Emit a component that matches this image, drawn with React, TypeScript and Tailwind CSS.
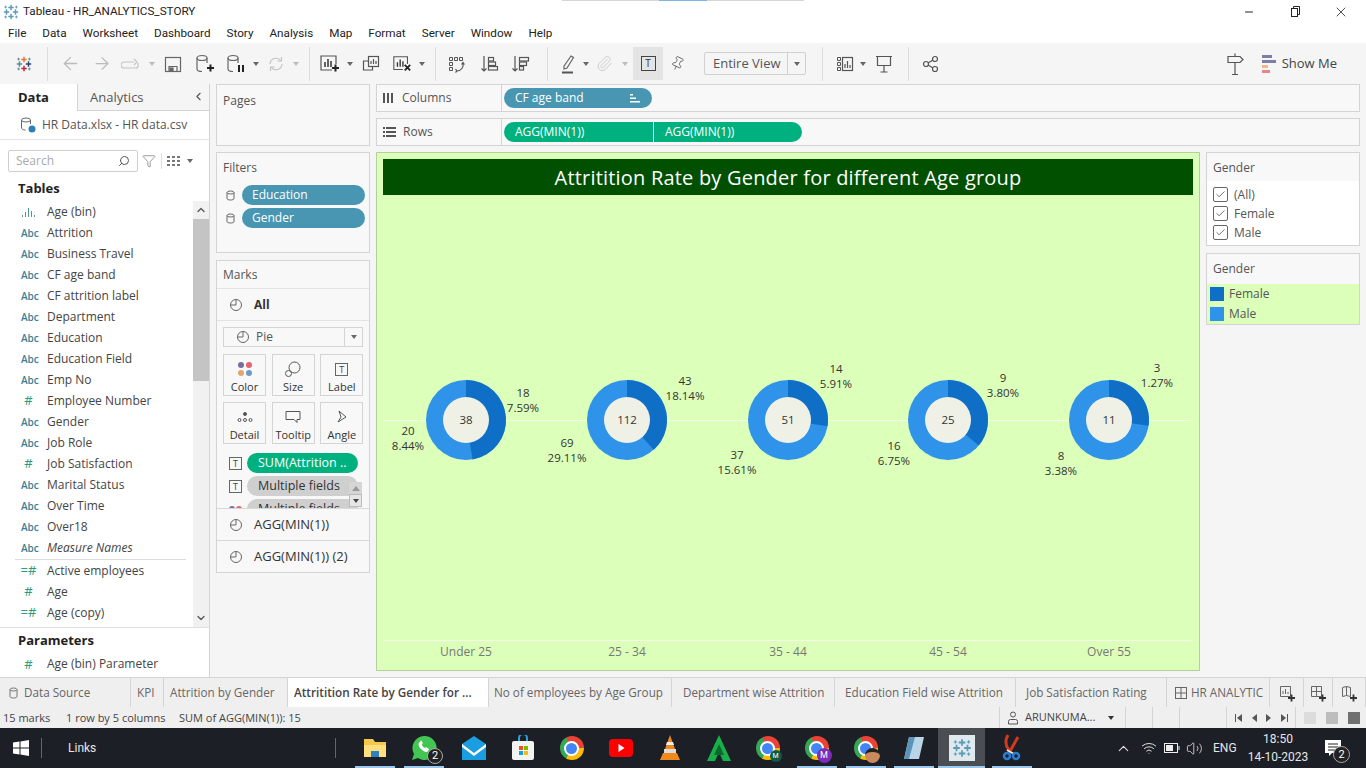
import type { ReactNode } from "react";
import { ArrowLeft, ArrowRight, Check, ChevronDown, ChevronLeft, ChevronUp, Minus, Paperclip, Pin, Search, Wifi, Volume2, X, Filter } from "lucide-react";

const font = { fontFamily: '"Open Sans", "Liberation Sans", sans-serif' };
const uiFont = { fontFamily: 'Roboto, "Liberation Sans", sans-serif' };

const fields: [string, string, boolean?][] = [
  ["bin", "Age (bin)"],
  ["abc", "Attrition"],
  ["abc", "Business Travel"],
  ["abc", "CF age band"],
  ["abc", "CF attrition label"],
  ["abc", "Department"],
  ["abc", "Education"],
  ["abc", "Education Field"],
  ["abc", "Emp No"],
  ["num", "Employee Number"],
  ["abc", "Gender"],
  ["abc", "Job Role"],
  ["num", "Job Satisfaction"],
  ["abc", "Marital Status"],
  ["abc", "Over Time"],
  ["abc", "Over18"],
  ["abc", "Measure Names", true],
];

const measures: [string, string][] = [
  ["calc", "Active employees"],
  ["num", "Age"],
  ["calc", "Age (copy)"],
];

const FieldIcon = ({ kind }: { kind: string }) => {
  if (kind === "abc") return <span className="w-[38px] pl-[21px] text-[10px] font-semibold text-[#3d7f95] leading-none whitespace-nowrap">Abc</span>;
  if (kind === "bin")
    return (
      <span className="w-[38px] pl-[21px]">
        <svg width="16" height="12" viewBox="0 0 16 12" fill="#4c9e8a">
          <rect x="1" y="9" width="1" height="2" /><rect x="4" y="6" width="1" height="5" /><rect x="7" y="2" width="1" height="9" /><rect x="10" y="5" width="1" height="6" /><rect x="13" y="9" width="1" height="2" />
        </svg>
      </span>
    );
  return <span className="w-[38px] pl-[19px] text-[13px] text-[#2f9a7c] leading-none whitespace-nowrap text-center">{kind === "calc" ? "=#" : "#"}</span>;
};

const Svg = ({ children, w = 20, h = 20, c = "#555" }: { children: ReactNode; w?: number; h?: number; c?: string }) => (
  <svg width={w} height={h} viewBox={`0 0 ${w} ${h}`} fill="none" stroke={c} strokeWidth="1.2">{children}</svg>
);

const Caret = ({ c = "#666" }: { c?: string }) => <span className="block w-0 h-0 border-x-[3px] border-x-transparent border-t-[4px] shrink-0" style={{ borderTopColor: c }} />;

const TableauMark = ({ size = 18, dark = false }: { size?: number; dark?: boolean }) => {
  const col = dark ? ["#e8762c", "#c72035", "#5b879b", "#1f447e"] : ["#5b9bb5", "#5b9bb5", "#5b9bb5", "#5b9bb5"];
  return (
    <svg width={size} height={size} viewBox="0 0 20 20" strokeWidth="1.6">
      <path d="M10 2v6M7 5h6" stroke={col[0]} />
      <path d="M10 12v6M7 15h6" stroke={col[1]} />
      <path d="M2 10h6M5 7v6" stroke={col[2]} />
      <path d="M12 10h6M15 7v6" stroke={col[3]} />
      <path d="M4 3v3M2.5 4.5h3M16 3v3M14.500 4.500h3M4 14v3M2.500 15.500h3M16 14v3M14.500 15.500h3" stroke={col[2]} strokeWidth="1" />
    </svg>
  );
};

const Plus = () => <path d="M13 15h7M16.500 11.500v7" stroke="#222" strokeWidth="2" />;

const Db = ({ badge }: { badge: ReactNode }) => (
  <Svg w={22} h={22} c="#666">
    <ellipse cx="8" cy="5" rx="5" ry="2.500" />
    <path d="M3 5v11c0 1.500 2 2.500 5 2.500M13 5v5" />
    {badge}
  </Svg>
);

const ChartPlus = () => (
  <Svg w={22} h={22} c="#555">
    <path d="M13 17H2V3h15v8" />
    <path d="M6 14V9M9 14V6M12 14V8" stroke="#333" strokeWidth="1.500" />
    <Plus />
  </Svg>
);

const Tool = ({ w, children }: { w: number; children?: ReactNode }) => (
  <div className="flex items-center justify-center shrink-0 h-full" style={{ width: w }}>{children}</div>
);

const Sep = () => <div className="w-px h-[34px] bg-[#dcdcdc] shrink-0" />;

const Pill = ({ label, color, w, icon }: { label: string; color: string; w: number; icon?: ReactNode }) => (
  <div className="h-5 rounded-[10px] flex items-center justify-between pl-[11px] pr-3 text-white text-[12px]" style={{ width: w, backgroundColor: color }}>
    <span>{label}</span>
    {icon}
  </div>
);

const MarkBtn = ({ label, children }: { label: string; children: ReactNode }) => (
  <div className="w-[43px] h-[42px] border border-[#d4d4d4] flex flex-col items-center justify-end pb-[1px] gap-[2px] text-[11px] leading-[14px] text-[#333]">
    <div className="h-[18px] flex items-center">{children}</div>
    <span className="whitespace-nowrap">{label}</span>
  </div>
);

const PieIcon = () => (
  <svg width="14" height="14" viewBox="0 0 14 14" fill="none" stroke="#666" strokeWidth="1">
    <circle cx="7" cy="7" r="5.500" /><path d="M7 7V1.500M7 7H1.500" />
  </svg>
);

const TBox = () => (
  <span className="block w-[13px] h-[13px] border border-[#666] text-[9px] leading-[11px] text-center text-[#444] shrink-0">T</span>
);

const donuts = [
  { cx: 466, total: 38, f: 18, m: 20 },
  { cx: 627, total: 112, f: 43, m: 69 },
  { cx: 788, total: 51, f: 14, m: 37 },
  { cx: 948, total: 25, f: 9, m: 16 },
  { cx: 1109, total: 11, f: 3, m: 8 },
];

const pieLabels = [
  [523, 393, "18", "7.59%"], [408, 431, "20", "8.44%"],
  [685, 381, "43", "18.14%"], [567, 443, "69", "29.11%"],
  [836, 369, "14", "5.91%"], [737, 455, "37", "15.61%"],
  [1003, 378, "9", "3.80%"], [894, 446, "16", "6.75%"],
  [1157, 368, "3", "1.27%"], [1061, 456, "8", "3.38%"],
] as [number, number, string, string][];

const axis = ["Under 25", "25 - 34", "35 - 44", "45 - 54", "Over 55"];

const slice = (cx: number, cy: number, r: number, frac: number) => {
  const a = frac * 2 * Math.PI;
  const x = cx + r * Math.sin(a);
  const y = cy - r * Math.cos(a);
  return `M${cx} ${cy}L${cx} ${cy - r}A${r} ${r} 0 ${frac > 0.5 ? 1 : 0} 1 ${x} ${y}Z`;
};

// chart coordinates are page coordinates minus the viz box origin (376, 195)
const Chart = () => (
  <svg width="824" height="476" viewBox="376 195 824 476" className="block" style={font}>
    <line x1="384" x2="1192" y1="420.500" y2="420.500" stroke="#f4fbe8" />
    <line x1="384" x2="1192" y1="640.500" y2="640.500" stroke="#f4fbe8" />
    {donuts.map((d) => (
      <g key={d.cx}>
        <circle cx={d.cx} cy={420} r={40} fill="#2f93ea" />
        <path d={slice(d.cx, 420, 40, d.f / d.total)} fill="#0f6fc6" />
        <circle cx={d.cx} cy={420} r={23} fill="#eff1e6" />
        <text x={d.cx} y={424} textAnchor="middle" fontSize="11.500" fill="#333">{d.total}</text>
      </g>
    ))}
    {pieLabels.map(([x, y, a, b]) => (
      <g key={b} fontSize="11.500" fill="#333" textAnchor="middle">
        <text x={x} y={y + 4}>{a}</text>
        <text x={x} y={y + 19}>{b}</text>
      </g>
    ))}
    {axis.map((t, i) => (
      <text key={t} x={donuts[i].cx} y={656} textAnchor="middle" fontSize="12" fill="#777">{t}</text>
    ))}
  </svg>
);

const Chrome = ({ badge }: { badge?: ReactNode }) => (
  <div className="relative w-6 h-6">
    <div className="w-6 h-6 rounded-full flex items-center justify-center" style={{ background: "conic-gradient(from -30deg, #ea4335 0 120deg, #fbbc05 120deg 240deg, #34a853 240deg 360deg)" }}>
      <div className="w-[11px] h-[11px] rounded-full bg-[#4285f4] border-2 border-white box-content" />
    </div>
    {badge}
  </div>
);

const tabs: [string, number, number][] = [
  ["KPI", 33, 6],
  ["Attrition by Gender", 124, 6],
];
const tabsRight: [string, number, number][] = [
  ["No of employees by Age Group", 183, 5],
  ["Department wise Attrition", 163, 11],
  ["Education Field wise Attrition", 181, 10],
  ["Job Satisfaction Rating", 151, 10],
];

const TaskIcon = ({ w, active, children, on }: { w: number; active?: boolean; children: ReactNode; on?: boolean }) => (
  <div className={`relative h-full flex items-center justify-center shrink-0 ${on ? "bg-[#4a4d52]" : ""}`} style={{ width: w }}>
    {children}
    {active && <span className={`absolute bottom-0 h-[2px] bg-[#9cc8ee] ${on ? "left-0 right-0" : "left-1/2 -translate-x-1/2 w-10"}`} />}
  </div>
);

export default function App() {
  return (
    <div className="w-[1366px] h-[768px] overflow-hidden flex flex-col bg-white text-[#333] text-[12px] relative" style={font}>
      <div className="absolute top-0 left-[562px] w-[242px] h-px bg-[#d6d6d6]"><div className="ml-[97px] w-[48px] h-px bg-[#7fb2de]" /></div>

      {/* title bar */}
      <div className="h-[23px] flex items-center shrink-0 pl-[2px]" style={uiFont}>
        <TableauMark size={18} />
        <span className="ml-[3px] text-[11.700px] text-[#222]">Tableau - HR_ANALYTICS_STORY</span>
        <div className="ml-auto flex items-center h-full pr-[2px]">
          <Tool w={46}><Minus size={12} color="#222" /></Tool>
          <Tool w={46}>
            <svg width="12" height="12" viewBox="0 0 12 12" fill="none" stroke="#222"><rect x="2.500" y="2.500" width="6" height="8" /><path d="M4.500 2.500V0.500h6v8h-2" /></svg>
          </Tool>
          <Tool w={46}><X size={16} color="#222" strokeWidth={1.2} /></Tool>
        </div>
      </div>

      {/* menu */}
      <div className="h-5 flex items-center shrink-0 pl-2 pt-px gap-[16px] text-[11.700px] text-[#222]" style={uiFont}>
        {["File", "Data", "Worksheet", "Dashboard", "Story", "Analysis", "Map", "Format", "Server", "Window", "Help"].map((m) => (
          <span key={m}>{m}</span>
        ))}
      </div>

      {/* toolbar */}
      <div className="h-[41px] bg-[#f5f5f5] flex items-center shrink-0">
        <Tool w={47}><TableauMark size={18} dark /></Tool>
        <Sep />
        <Tool w={44}><ArrowLeft size={21} color="#bbb" strokeWidth={1.500} /></Tool>
        <Tool w={20}><ArrowRight size={21} color="#bbb" strokeWidth={1.500} /></Tool>
        <Tool w={38}>
          <Svg w={20} h={14} c="#c4c4c4"><path d="M13 5H3a2 2 0 0 0 0 6h12a2 2 0 0 0 2-2V6M13 2l3 3-3 3" /></Svg>
        </Tool>
        <Tool w={4}><Caret c="#bbb" /></Tool>
        <Tool w={38}>
          <Svg w={18} h={18} c="#666"><rect x="1.500" y="2.500" width="15" height="14" /><path d="M5 16.500v-5h8v5" /><rect x="6" y="13" width="3" height="3" fill="#666" /></Svg>
        </Tool>
        <Tool w={26}><Db badge={<Plus />} /></Tool>
        <Tool w={36}><Db badge={<path d="M14 12v7M18 12v7" stroke="#222" strokeWidth="2" />} /></Tool>
        <Tool w={4}><Caret /></Tool>
        <Tool w={36}>
          <Svg w={18} h={18} c="#c4c4c4"><path d="M3 9a6 6 0 0 1 11-3M15 9a6 6 0 0 1-11 3M14.500 2v4h-4M3.500 16v-4h4" /></Svg>
        </Tool>
        <Tool w={4}><Caret c="#bbb" /></Tool>
        <Tool w={11} />
        <Sep />
        <Tool w={40}><ChartPlus /></Tool>
        <Tool w={0}><Caret /></Tool>
        <Tool w={42}>
          <Svg w={20} h={20} c="#555"><rect x="7.500" y="2.500" width="10" height="10" /><path d="M10 10V7M12.500 10V5M15 10V7" /><path d="M7 7H2.500v9h9v-3" /></Svg>
        </Tool>
        <Tool w={20}>
          <Svg w={22} h={22} c="#555">
            <path d="M12 17H2V3h15v8" /><path d="M6 14V9M9 14V6M12 14V8" stroke="#333" strokeWidth="1.500" />
            <path d="M14 12l6 6M20 12l-6 6" stroke="#222" strokeWidth="2" />
          </Svg>
        </Tool>
        <Tool w={20}><Caret /></Tool>
        <Tool w={3} />
        <Sep />
        <Tool w={42}>
          <Svg w={20} h={20} c="#555">
            <path d="M2.500 3.500h3v3h-3zM7.500 3.500h3v3h-3zM12.500 3.500h3v3h-3zM2.500 8.500h3v3h-3zM2.500 13.500h3v3h-3z" strokeWidth="1" />
            <path d="M16 9c1 4-2 8-6 8M8.500 15l1.500 2-1.500 1.500M14.500 10.500l1.500-2 1.500 2" />
          </Svg>
        </Tool>
        <Tool w={24}>
          <Svg w={20} h={20} c="#555"><path d="M4 2v15M1.500 14.500L4 17l2.500-2.500" /><rect x="8.500" y="3.500" width="5" height="3.500" /><rect x="8.500" y="8" width="7" height="3.500" /><rect x="8.500" y="12.500" width="9" height="3.500" /></Svg>
        </Tool>
        <Tool w={38}>
          <Svg w={20} h={20} c="#555"><path d="M4 2v15M1.500 14.500L4 17l2.500-2.500" /><rect x="8.500" y="3.500" width="9" height="3.500" /><rect x="8.500" y="8" width="7" height="3.500" /><rect x="8.500" y="12.500" width="4" height="3.500" /></Svg>
        </Tool>
        <Tool w={7} />
        <Sep />
        <Tool w={2} />
        <Tool w={36}>
          <Svg w={18} h={20} c="#666"><path d="M5 12L12 2l2.500 1.500L8 14l-3 1zM3 18.500h11" /><path d="M3 18.500h11" stroke="#555" strokeWidth="2" /></Svg>
        </Tool>
        <Tool w={0}><Caret /></Tool>
        <Tool w={36}><Paperclip size={17} color="#c4c4c4" strokeWidth={1.200} /></Tool>
        <Tool w={5}><Caret c="#bbb" /></Tool>
        <Tool w={6} />
        <div className="w-[30px] h-[33px] bg-[#e4e4e4] flex items-center justify-center shrink-0">
          <span className="w-[15px] h-[15px] border border-[#444] text-[10px] leading-[13px] text-center text-[#333]">T</span>
        </div>
        <Tool w={28}><Pin size={15} color="#555" strokeWidth={1.200} className="rotate-[25deg]" /></Tool>
        <Tool w={13} />
        <div className="w-[102px] h-[23px] border border-[#d0d0d0] rounded-[2px] flex items-center shrink-0 text-[#555] text-[13px]">
          <span className="pl-2 flex-1 whitespace-nowrap">Entire View</span>
          <span className="w-[18px] h-full border-l border-[#d0d0d0] flex items-center justify-center"><Caret /></span>
        </div>
        <Tool w={16} />
        <Sep />
        <Tool w={4} />
        <Tool w={36}>
          <Svg w={18} h={18} c="#555"><path d="M1.500 2.500h3v3h-3zM1.500 7.500h3v3h-3zM1.500 12.500h3v3h-3z" strokeWidth="1" /><rect x="6.500" y="2.500" width="10" height="13" /><path d="M9 13V9M11.500 13V6M14 13v-3" /></Svg>
        </Tool>
        <Tool w={0}><Caret /></Tool>
        <Tool w={42}>
          <Svg w={18} h={20} c="#555"><path d="M1 2.500h16M2.500 2.500v9h13v-9M9 11.500V18M5.500 18h7" /></Svg>
        </Tool>
        <Tool w={3} />
        <Sep />
        <Tool w={44}>
          <Svg w={18} h={18} c="#555"><circle cx="4" cy="9" r="2.500" /><circle cx="13" cy="4" r="2.500" /><circle cx="13" cy="14" r="2.500" /><path d="M6 8l5-3M6 10l5 3" /></Svg>
        </Tool>
        <div className="ml-auto flex items-center h-full pr-[29px]">
          <Svg w={20} h={24} c="#555"><path d="M3 4.500h12l3 3-3 3H3zM10 1.500v3M10 10.500v12M7 22.500h6" /></Svg>
          <div className="ml-[17px] flex flex-col gap-[2px] w-[14px]">
            <span className="h-[3px] w-[10px] bg-[#7d7da6]" /><span className="h-[3px] w-[14px] bg-[#7d7da6]" /><span className="h-[3px] w-[6px] bg-[#f0b78a]" /><span className="h-[3px] w-[8px] bg-[#e5848c]" />
          </div>
          <span className="ml-[6px] text-[13px] text-[#444] whitespace-nowrap">Show Me</span>
        </div>
      </div>

      {/* main */}
      <div className="flex-1 min-h-0 flex bg-[#f5f5f5]">
        {/* data pane */}
        <aside className="w-[210px] shrink-0 bg-white border-r border-[#d4d4d4] flex flex-col">
          <div className="h-[27px] flex shrink-0 text-[13px]">
            <div className="w-[77px] pl-[18px] flex items-center font-bold text-[#222]">Data</div>
            <div className="flex-1 flex items-center pl-[12px] pt-px bg-[#f5f5f5] border-l border-b border-[#d4d4d4] text-[#555] relative">
              Analytics
              <ChevronLeft size={13} color="#555" className="absolute right-[4px] top-[6px]" />
            </div>
          </div>
          <div className="h-[29px] flex items-center pl-[20px] gap-[6px] shrink-0 border-b border-[#e6e6e6] text-[#555]">
            <svg width="16" height="16" viewBox="0 0 16 16" fill="none" stroke="#666"><ellipse cx="6" cy="3" rx="4.500" ry="2" /><path d="M1.500 3v8c0 1 1.500 2 4 2M10.500 3v4" /><circle cx="12" cy="12" r="3.500" fill="#2f7fb5" stroke="none" /></svg>
            <span className="whitespace-nowrap">HR Data.xlsx - HR data.csv</span>
          </div>
          <div className="h-[22px] mt-[10px] flex items-center shrink-0 pl-2">
            <div className="w-[130px] h-[22px] border border-[#cfcfcf] rounded-[2px] flex items-center justify-between px-[7px] text-[#aaa]">
              <span>Search</span>
              <Search size={12} color="#555" className="-scale-x-100" />
            </div>
            <Filter size={14} color="#555" strokeWidth={1} className="ml-[4px]" />
            <span className="w-px h-4 bg-[#ddd] ml-[5px]" />
            <svg className="ml-[5px]" width="13" height="10" viewBox="0 0 13 10" fill="#777"><path d="M0 0h3v2H0zM5 0h3v2H5zM10 0h3v2h-3zM0 4h3v2H0zM5 4h3v2H5zM10 4h3v2h-3zM0 8h3v2H0zM5 8h3v2H5zM10 8h3v2h-3z" /></svg>
            <span className="ml-[7px] flex"><Caret /></span>
          </div>
          <div className="h-[29px] flex items-end pl-[18px] text-[13px] font-bold text-[#222] shrink-0 pb-[3px]">Tables</div>
          <div className="h-[427px] flex shrink-0 border-b border-[#e0e0e0]">
            <div className="flex-1 min-w-0 overflow-hidden">
              {fields.map(([k, n, it]) => (
                <div key={n} className="h-[21px] flex items-center text-[#444]">
                  <FieldIcon kind={k} />
                  <span className={`ml-[9px] whitespace-nowrap ${it ? "italic" : ""}`}>{n}</span>
                </div>
              ))}
              <div className="ml-[15px] mr-[7px] border-t border-[#dcdcdc] mt-[1px]" />
              {measures.map(([k, n]) => (
                <div key={n} className="h-[21px] flex items-center text-[#444]">
                  <FieldIcon kind={k} />
                  <span className="ml-[9px] whitespace-nowrap">{n}</span>
                </div>
              ))}
            </div>
            <div className="w-[16px] shrink-0 bg-[#f1f1f1] flex flex-col items-center">
              <ChevronUp size={12} color="#555" strokeWidth={2.500} className="my-[3px]" />
              <div className="w-full h-[162px] bg-[#c4c4c4]" />
              <ChevronDown size={12} color="#555" strokeWidth={2.500} className="mt-auto mb-[3px]" />
            </div>
          </div>
          <div className="h-[22px] flex items-end pl-[18px] text-[13px] font-bold text-[#222] shrink-0">Parameters</div>
          <div className="h-[28px] flex items-center text-[#444] shrink-0">
            <FieldIcon kind="num" />
            <span className="ml-[9px] whitespace-nowrap">Age (bin) Parameter</span>
          </div>
        </aside>

        {/* cards */}
        <div className="w-[154px] ml-[6px] shrink-0 flex flex-col">
          <div className="h-[62px] bg-[#f8f8f8] border border-[#d4d4d4] px-[6px] pt-[7px] text-[#555]">Pages</div>
          <div className="h-[101px] mt-[6px] bg-[#f8f8f8] border border-[#d4d4d4] pl-[6px] pr-[4px] pt-[6px]">
            <div className="text-[#555]">Filters</div>
            <div className="mt-[8px] flex flex-col gap-[3px]">
              {["Education", "Gender"].map((f) => (
                <div key={f} className="flex items-center">
                  <svg className="ml-[3px] mr-[7px] shrink-0" width="9" height="11" viewBox="0 0 9 11" fill="none" stroke="#666"><ellipse cx="4.500" cy="2.500" rx="3.500" ry="1.500" /><path d="M1 2.500v6c0 2 7 2 7 0v-6" /></svg>
                  <div className="flex-1 h-5 rounded-[10px] bg-[#4996b2] text-white pl-[10px] flex items-center">{f}</div>
                </div>
              ))}
            </div>
          </div>
          <div className="h-[313px] mt-[7px] bg-[#f8f8f8] border border-[#d4d4d4] flex flex-col text-[#333]">
            <div className="h-[28px] flex items-center px-[6px] text-[#555] border-b border-[#e4e4e4] shrink-0">Marks</div>
            <div className="h-[32px] flex items-center pl-[12px] gap-[11px] border-b border-[#e4e4e4] shrink-0">
              <PieIcon /><span className="font-bold">All</span>
            </div>
            <div className="h-[187px] px-[6px] pt-[6px] relative overflow-hidden shrink-0">
              <div className="h-5 border border-[#d4d4d4] flex items-center text-[#555]">
                <span className="ml-[12px] mr-[6px]"><PieIcon /></span>Pie
                <span className="ml-auto w-[18px] h-full border-l border-[#d4d4d4] flex items-center justify-center"><Caret /></span>
              </div>
              <div className="grid grid-cols-3 gap-x-[6px] gap-y-[6px] mt-[7px] w-[140px]">
                <MarkBtn label="Color">
                  <svg width="16" height="16" viewBox="0 0 16 16"><circle cx="4" cy="4" r="3" fill="#7d6b9e" /><circle cx="12" cy="4" r="3" fill="#e5646e" /><circle cx="4" cy="12" r="3" fill="#e8a26c" /><circle cx="12" cy="12" r="3" fill="#6b9cc9" /></svg>
                </MarkBtn>
                <MarkBtn label="Size">
                  <svg width="16" height="16" viewBox="0 0 16 16" fill="none" stroke="#555"><circle cx="9.500" cy="6.500" r="5.500" /><circle cx="3.500" cy="12.500" r="3" /></svg>
                </MarkBtn>
                <MarkBtn label="Label"><TBox /></MarkBtn>
                <MarkBtn label="Detail">
                  <svg width="16" height="14" viewBox="0 0 16 14" fill="none" stroke="#555"><circle cx="8" cy="4" r="1.500" fill="#555" /><circle cx="2.500" cy="10" r="1.500" /><circle cx="8" cy="10" r="1.500" /><circle cx="13.500" cy="10" r="1.500" /></svg>
                </MarkBtn>
                <MarkBtn label="Tooltip">
                  <svg width="16" height="14" viewBox="0 0 16 14" fill="none" stroke="#555"><path d="M1 1.500h14v8h-3v3l-3-3H1z" /></svg>
                </MarkBtn>
                <MarkBtn label="Angle">
                  <svg width="12" height="14" viewBox="0 0 12 14" fill="none" stroke="#555"><path d="M3 1l7 6-8 5 3-5z" /></svg>
                </MarkBtn>
              </div>
              <div className="mt-[9px] flex items-center text-[12.500px]">
                <span className="ml-[6px] flex"><TBox /></span>
                <div className="ml-[5px] w-[111px] h-5 rounded-[10px] bg-[#00b180] text-white pl-[11px] flex items-center whitespace-nowrap overflow-hidden">SUM(Attrition ..</div>
              </div>
              <div className="mt-[3px] flex items-center text-[12.500px]">
                <span className="ml-[6px] flex"><TBox /></span>
                <div className="ml-[5px] w-[111px] h-5 rounded-[10px] bg-[#cfcfcf] text-[#333] pl-[11px] flex items-center whitespace-nowrap overflow-hidden">Multiple fields</div>
              </div>
              <div className="mt-[3px] flex items-center text-[12.500px]">
                <svg className="ml-[5px] shrink-0" width="16" height="8" viewBox="0 0 16 8"><circle cx="4" cy="4" r="3" fill="#7d6b9e" /><circle cx="11" cy="4" r="3" fill="#e5646e" /></svg>
                <div className="ml-[3px] w-[111px] h-5 rounded-[10px] bg-[#cfcfcf] text-[#333] pl-[11px] flex items-center whitespace-nowrap overflow-hidden">Multiple fields</div>
              </div>
              <div className="absolute right-[7px] top-[161px] w-[13px] h-[25px] flex flex-col items-center">
                <div className="h-[12px] w-full bg-[#d6d6d6] flex items-center justify-center"><span className="border-x-[4px] border-x-transparent border-b-[5px] border-b-[#999] w-0 h-0" /></div>
                <div className="h-[13px] w-full bg-[#e6e6e6] border border-[#bbb] flex items-center justify-center"><Caret c="#444" /></div>
              </div>
            </div>
            {["AGG(MIN(1))", "AGG(MIN(1)) (2)"].map((l) => (
              <div key={l} className="h-[32px] flex items-center pl-[12px] gap-[11px] border-t border-[#d8d8d8] text-[13px] shrink-0"><PieIcon /><span>{l}</span></div>
            ))}
          </div>
        </div>

        {/* shelves and view */}
        <div className="flex-1 min-w-0 ml-[6px] flex flex-col">
          <div className="h-[28px] mr-[6px] bg-[#f8f8f8] border border-[#d4d4d4] flex items-center shrink-0">
            <div className="w-[125px] h-full flex items-center border-r border-[#d4d4d4] pl-[6px] text-[#555] gap-[7px]">
              <span className="flex gap-[2px] w-[12px]"><i className="w-[2px] h-[10px] bg-[#555]" /><i className="w-[2px] h-[10px] bg-[#555]" /><i className="w-[2px] h-[10px] bg-[#555]" /></span>
              Columns
            </div>
            <div className="ml-[2px]">
              <Pill label="CF age band" color="#4996b2" w={148} icon={
                <svg width="10" height="10" viewBox="0 0 10 10" fill="#fff"><path d="M0 1h3v1.500H0zM0 4.500h6V6H0zM0 8h10v1.500H0z" /></svg>
              } />
            </div>
          </div>
          <div className="h-[28px] mt-[6px] mr-[6px] bg-[#f8f8f8] border border-[#d4d4d4] flex items-center shrink-0">
            <div className="w-[125px] h-full flex items-center border-r border-[#d4d4d4] pl-[6px] text-[#555] gap-[7px]">
              <svg width="13" height="10" viewBox="0 0 13 10" fill="#555"><path d="M0 0h2v2H0zM3 0h10v2H3zM0 4h2v2H0zM3 4h10v2H3zM0 8h2v2H0zM3 8h10v2H3z" /></svg>
              Rows
            </div>
            <div className="ml-[2px] flex gap-[1px]">
              <div className="w-[149px] h-5 rounded-l-[10px] bg-[#00b180] text-white pl-[11px] flex items-center">AGG(MIN(1))</div>
              <div className="w-[148px] h-5 rounded-r-[10px] bg-[#00b180] text-white pl-[11px] flex items-center">AGG(MIN(1))</div>
            </div>
          </div>
          <div className="flex-1 min-h-0 flex mt-[6px]">
            <div className="w-[824px] h-[519px] shrink-0 bg-[#dcffb9] border border-[#b5cf9a] flex flex-col overflow-hidden">
              <div className="mx-[6px] mt-[6px] h-[36px] shrink-0 bg-[#005000] flex items-center justify-center pt-[2px] text-white text-[20px] font-medium tracking-[0.2px]">
                Attritition Rate by Gender for different Age group
              </div>
              <div className="-ml-px"><Chart /></div>
            </div>
            <div className="w-[154px] ml-[6px] shrink-0 flex flex-col gap-[7px]">
              <div className="h-[94px] bg-white border border-[#d4d4d4]">
                <div className="h-[28px] bg-[#f8f8f8] flex items-center px-[6px] pt-[2px] text-[#555]">Gender</div>
                <div className="pl-[6px] pt-[4px] flex flex-col">
                  {["(All)", "Female", "Male"].map((o) => (
                    <div key={o} className="h-[19px] flex items-center gap-[6px] text-[#555]">
                      <span className="w-[15px] h-[15px] border border-[#666] rounded-[2px] flex items-center justify-center"><Check size={11} color="#666" strokeWidth={2} /></span>
                      {o}
                    </div>
                  ))}
                </div>
              </div>
              <div className="h-[72px] bg-[#f8f8f8] border border-[#d4d4d4]">
                <div className="h-[30px] flex items-center px-[6px] text-[#555]">Gender</div>
                <div className="h-[40px] bg-[#dcffb9] pl-[3px] text-[#555]">
                  <div className="h-[20px] flex items-center gap-[5px]"><span className="w-[14px] h-[14px] bg-[#0f6fc6]" />Female</div>
                  <div className="h-[20px] flex items-center gap-[5px]"><span className="w-[14px] h-[14px] bg-[#2f93ea]" />Male</div>
                </div>
              </div>
            </div>
          </div>
        </div>
      </div>

      {/* sheet tabs */}
      <div className="h-[30px] flex shrink-0 bg-[#efefef] border-t border-[#d4d4d4] text-[#666] text-[11.700px]">
        <div className="w-[131px] flex items-center pl-[9px] gap-[6px] border-r border-[#d4d4d4] shrink-0">
          <svg width="9" height="12" viewBox="0 0 9 12" fill="none" stroke="#777"><ellipse cx="4.500" cy="2.500" rx="3.500" ry="1.500" /><path d="M1 2.500v7c0 2 7 2 7 0v-7" /></svg>
          Data Source
        </div>
        {tabs.map(([t, w, p]) => (
          <div key={t} className="flex items-center border-r border-[#d4d4d4] shrink-0 whitespace-nowrap" style={{ width: w, paddingLeft: p }}>{t}</div>
        ))}
        <div className="w-[201px] bg-white flex items-center pl-[6px] font-semibold text-[#444] border-r border-[#d4d4d4] shrink-0 whitespace-nowrap">Attritition Rate by Gender for ...</div>
        {tabsRight.map(([t, w, p]) => (
          <div key={t} className="flex items-center border-r border-[#d4d4d4] shrink-0 whitespace-nowrap" style={{ width: w, paddingLeft: p }}>{t}</div>
        ))}
        <div className="w-[103px] flex items-center pl-[8px] gap-[4px] border-r border-[#d4d4d4] shrink-0 whitespace-nowrap overflow-hidden">
          <svg className="shrink-0" width="12" height="12" viewBox="0 0 12 12" fill="none" stroke="#666"><rect x="0.500" y="0.500" width="11" height="11" /><path d="M6 0v12M0 6h12" /></svg>
          HR ANALYTIC
        </div>
        {[34, 29, 33].map((w, i) => (
          <div key={w} className="flex items-center justify-center border-r border-[#d4d4d4] shrink-0" style={{ width: w }}>
            <svg width="18" height="18" viewBox="0 0 18 18" fill="none" stroke="#666">
              {i === 0 && <path d="M2.500 2.500h10v10h-10zM5 10V7M7.500 10V5M10 10V8" />}
              {i === 1 && <path d="M2.500 2.500h10v10h-10zM7.500 2.500v10M2.500 7.500h10" />}
              {i === 2 && <path d="M2.500 3.500l4-1 4 1v9l-4-1-4 1zM6.500 2.500v9" />}
              <path d="M10 14h7M13.500 10.500v7" stroke="#333" strokeWidth="1.800" />
            </svg>
          </div>
        ))}
      </div>

      {/* status bar */}
      <div className="h-[21px] flex items-center shrink-0 bg-[#efefef] text-[11px] text-[#444] pl-[3px]">
        <span className="w-[63px] pt-px">15 marks</span>
        <span className="w-[113px] pt-px">1 row by 5 columns</span>
        <span className="pt-px">SUM of AGG(MIN(1)): 15</span>
        <div className="ml-auto flex items-center h-full">
          <div className="w-[127px] h-full border-x border-[#d4d4d4] flex items-center pl-[7px] gap-[6px] whitespace-nowrap">
            <svg width="12" height="14" viewBox="0 0 12 14" fill="none" stroke="#555"><circle cx="6" cy="3.500" r="2.500" /><path d="M1.500 13v-2.500a2 2 0 0 1 2-2h5a2 2 0 0 1 2 2V13z" /></svg>
            ARUNKUMA...
            <span className="ml-[7px] flex"><Caret c="#333" /></span>
          </div>
          <div className="w-[27px] h-full border-r border-[#d4d4d4]" />
          <div className="w-[27px] h-full border-r border-[#d4d4d4]" />
          <div className="w-[47px] h-full border-r border-[#d4d4d4]" />
          <div className="w-[69px] h-full flex items-center justify-center gap-[9px] text-[#555] border-r border-[#d4d4d4]">
            <svg width="7" height="8" viewBox="0 0 7 8" fill="#555"><path d="M0 0h1v8H0zM7 0v8L2 4z" /></svg>
            <svg width="6" height="8" viewBox="0 0 6 8" fill="#555"><path d="M6 0v8L1 4z" /></svg>
            <svg width="6" height="8" viewBox="0 0 6 8" fill="#555"><path d="M0 0v8l5-4z" /></svg>
            <svg width="7" height="8" viewBox="0 0 7 8" fill="#555"><path d="M6 0h1v8H6zM0 0v8l5-4z" /></svg>
          </div>
          <div className="w-[70px] h-full flex items-center justify-end gap-[10px] pr-[6px]">
            <span className="w-[12px] h-[12px] bg-[#dcdcdc]" /><span className="w-[12px] h-[12px] bg-[#bdbdbd]" /><span className="w-[12px] h-[12px] bg-[#707070]" />
          </div>
        </div>
      </div>

      {/* taskbar */}
      <div className="h-10 flex items-center shrink-0 bg-[#1c1f26] text-[#e6e6e6] text-[12px]" style={uiFont}>
        <TaskIcon w={41}>
          <svg width="16" height="16" viewBox="0 0 16 16" fill="#fff"><path d="M0 2.500l6.500-1v6H0zM7.500 1.400L16 0v7.500H7.500zM0 8.500h6.500v6l-6.500-1zM7.500 8.500H16V16l-8.500-1.400z" /></svg>
        </TaskIcon>
        <span className="w-px h-5 bg-[#666]" />
        <span className="w-[293px] pl-[26px]">Links</span>
        <span className="w-px h-5 bg-[#666]" />
        <TaskIcon w={19}><span /></TaskIcon>
        <TaskIcon w={40} active>
          <svg width="24" height="22" viewBox="0 0 24 22"><path d="M1 2h9l2 3h11v15H1z" fill="#f5c84c" /><rect x="1" y="8" width="22" height="12" fill="#ffdf7e" /><rect x="8" y="14" width="8" height="6" fill="#2f7fc1" /></svg>
        </TaskIcon>
        <TaskIcon w={9}><span /></TaskIcon>
        <TaskIcon w={40} active>
          <div className="relative">
            <svg width="26" height="26" viewBox="0 0 26 26"><path d="M13 1a12 12 0 0 0-10 18L1 25l6-2A12 12 0 1 0 13 1z" fill="#43c553" /><path d="M9 7c-2 1-2 4 1 7s6 4 7 2l1-2-3-2-1 1c-2-1-3-2-3-4l1-1-2-3z" fill="#fff" /></svg>
            <span className="absolute -right-[6px] -bottom-[3px] w-[16px] h-[16px] rounded-full bg-[#222] border border-[#aaa] text-[11px] leading-[14px] text-center text-white">2</span>
          </div>
        </TaskIcon>
        <TaskIcon w={5}><span /></TaskIcon>
        <TaskIcon w={49}>
          <svg width="26" height="24" viewBox="0 0 26 24"><path d="M13 0l12 8v16H1V8z" fill="#1b9de2" /><path d="M1 8l12 9 12-9v3L13 20 1 11z" fill="#fff" /></svg>
        </TaskIcon>
        <TaskIcon w={49}>
          <svg width="24" height="26" viewBox="0 0 24 26"><path d="M8 6V3a4 4 0 0 1 8 0v3" fill="none" stroke="#27a3e6" strokeWidth="2" /><rect x="1" y="6" width="22" height="19" rx="2" fill="#f3f3f3" /><rect x="8" y="11" width="4" height="4" fill="#f25022" /><rect x="13" y="11" width="4" height="4" fill="#7fba00" /><rect x="8" y="16" width="4" height="4" fill="#00a4ef" /><rect x="13" y="16" width="4" height="4" fill="#ffb900" /></svg>
        </TaskIcon>
        <TaskIcon w={49}><Chrome /></TaskIcon>
        <TaskIcon w={49}>
          <svg width="24" height="18" viewBox="0 0 24 18"><rect width="24" height="18" rx="4" fill="#f00" /><path d="M9.500 5l6 4-6 4z" fill="#fff" /></svg>
        </TaskIcon>
        <TaskIcon w={49}>
          <svg width="22" height="26" viewBox="0 0 22 26"><path d="M11 0l5 14H6z" fill="#f18a1c" /><path d="M8 7h6l1 3H7z" fill="#eee" /><path d="M4 18h14l3 7H1z" fill="#f18a1c" /><rect x="5" y="14" width="12" height="4" fill="#ddd" /></svg>
        </TaskIcon>
        <TaskIcon w={49}>
          <svg width="24" height="26" viewBox="0 0 24 26"><path d="M12 0l12 26h-8l-4-9-4 9H0z" fill="#17b04b" /><path d="M12 9l5 11H7z" fill="#0b6a2b" /></svg>
        </TaskIcon>
        <TaskIcon w={49}><Chrome badge={<span className="absolute -right-[2px] -bottom-[2px] w-[12px] h-[12px] rounded-full bg-[#0f5a45] text-[7px] leading-[12px] text-center text-white">M</span>} /></TaskIcon>
        <TaskIcon w={49} active><Chrome badge={<span className="absolute -right-[3px] -bottom-[3px] w-[15px] h-[15px] rounded-full bg-[#7b2cb8] text-[9px] leading-[15px] text-center text-white">M</span>} /></TaskIcon>
        <TaskIcon w={49} active><Chrome badge={<span className="absolute -right-[2px] -bottom-[3px] w-[15px] h-[15px] rounded-full bg-[#c98a5e] border-t-4 border-[#222]" />} /></TaskIcon>
        <TaskIcon w={48} active>
          <svg width="24" height="26" viewBox="0 0 24 26"><path d="M7 2h15l-5 22H2z" fill="#b9d6e8" /><path d="M7 2h6L7 24H2z" fill="#5c93b8" /></svg>
        </TaskIcon>
        <TaskIcon w={47} active on>
          <div className="w-[26px] h-[26px] bg-[#dfe9ee] flex items-center justify-center"><TableauMark size={22} /></div>
        </TaskIcon>
        <TaskIcon w={54} active>
          <svg width="22" height="28" viewBox="0 0 22 28" fill="none"><path d="M7 1c-3 5-3 10 1 15M17 3L8 19" stroke="#d33a1d" strokeWidth="3" /><path d="M6 16l7 4" stroke="#e8e8e8" strokeWidth="2" /><circle cx="6" cy="22" r="3" stroke="#2a7fd5" strokeWidth="2.500" /><circle cx="15" cy="22" r="3" stroke="#2a7fd5" strokeWidth="2.500" /></svg>
        </TaskIcon>
        <div className="ml-auto flex items-center h-full">
          <ChevronUp size={17} color="#ddd" strokeWidth={1.500} />
          <span className="ml-[9px] flex"><Wifi size={16} color="#ddd" strokeWidth={1.500} /></span>
          <svg className="ml-[7px]" width="16" height="10" viewBox="0 0 16 10" fill="none" stroke="#eee"><rect x="0.500" y="0.500" width="13" height="9" /><rect x="2" y="2" width="7" height="6" fill="#eee" stroke="none" /><path d="M15 3v4" /></svg>
          <span className="ml-[6px] flex"><Volume2 size={17} color="#ddd" strokeWidth={1.200} /></span>
          <span className="ml-[10px] w-[26px]">ENG</span>
          <div className="ml-[5px] w-[68px] text-center leading-[18px]">
            <div>18:50</div>
            <div>14-10-2023</div>
          </div>
          <div className="relative w-[50px] -ml-[4px] mr-[8px] flex justify-center">
            <svg width="18" height="18" viewBox="0 0 18 18" fill="#fff"><path d="M1 1h16v13H8l-3 3v-3H1z" /><path d="M4 5h10M4 8h10M4 11h7" stroke="#222" /></svg>
            <span className="absolute left-[25px] top-[7px] w-[17px] h-[17px] rounded-full bg-[#222] border border-[#aaa] text-[11px] leading-[15px] text-center text-white">2</span>
          </div>
        </div>
      </div>
    </div>
  );
}
